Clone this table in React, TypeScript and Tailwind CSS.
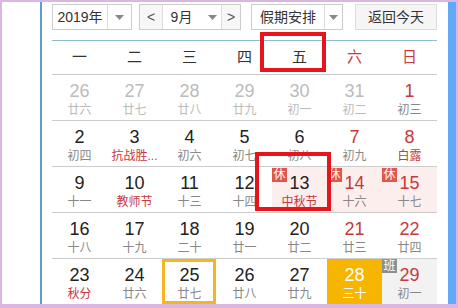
import React from 'react';

type Day = {
  d: number;
  l: string;
  muted?: boolean;
  red?: boolean;
  fest?: boolean;
  rest?: boolean;
  work?: boolean;
  today?: boolean;
  selected?: boolean;
};

const WEEK = ['一', '二', '三', '四', '五', '六', '日'];

const ROWS: Day[][] = [
  [
    { d: 26, l: '廿六', muted: true },
    { d: 27, l: '廿七', muted: true },
    { d: 28, l: '廿八', muted: true },
    { d: 29, l: '廿九', muted: true },
    { d: 30, l: '初一', muted: true },
    { d: 31, l: '初二', muted: true },
    { d: 1, l: '初三', red: true },
  ],
  [
    { d: 2, l: '初四' },
    { d: 3, l: '抗战胜...', fest: true },
    { d: 4, l: '初六' },
    { d: 5, l: '初七' },
    { d: 6, l: '初八' },
    { d: 7, l: '初九', red: true },
    { d: 8, l: '白露', red: true, fest: true },
  ],
  [
    { d: 9, l: '十一' },
    { d: 10, l: '教师节', fest: true },
    { d: 11, l: '十三' },
    { d: 12, l: '十四' },
    { d: 13, l: '中秋节', fest: true, rest: true },
    { d: 14, l: '十六', red: true, rest: true },
    { d: 15, l: '十七', red: true, rest: true },
  ],
  [
    { d: 16, l: '十八' },
    { d: 17, l: '十九' },
    { d: 18, l: '二十' },
    { d: 19, l: '廿一' },
    { d: 20, l: '廿二' },
    { d: 21, l: '廿三', red: true },
    { d: 22, l: '廿四', red: true },
  ],
  [
    { d: 23, l: '秋分', fest: true },
    { d: 24, l: '廿六' },
    { d: 25, l: '廿七', today: true },
    { d: 26, l: '廿八' },
    { d: 27, l: '廿九' },
    { d: 28, l: '三十', selected: true },
    { d: 29, l: '初一', red: true, work: true },
  ],
];

function Caret() {
  return (
    <svg width="9" height="5" viewBox="0 0 9 5">
      <path d="M0 0h9L4.5 5z" fill="#888" />
    </svg>
  );
}

function Cell({ day }: { day: Day }) {
  let bg = '';
  if (day.rest) bg = 'bg-[#fdeeee]';
  if (day.work) bg = 'bg-[#f2f2f2]';
  if (day.selected) bg = 'bg-[#f7b500]';

  let num = 'text-[#222]';
  if (day.red) num = 'text-[#c8383c]';
  if (day.muted) num = 'text-[#bbbbbb]';
  if (day.selected) num = 'text-white';

  let lunar = 'text-[#888]';
  if (day.fest) lunar = 'text-[#c8383c]';
  if (day.muted) lunar = 'text-[#bbbbbb]';
  if (day.selected) lunar = 'text-white';

  return (
    <div className={`relative flex flex-col items-center pt-[6px] ${bg}`}>
      <span className={`text-[18px] leading-[21px] ${num}`}>{day.d}</span>
      <span className={`text-[12px] leading-[16px] whitespace-nowrap ${lunar}`}>{day.l}</span>
      {day.rest && (
        <span className="absolute left-0 top-[1px] w-[15px] h-[14px] bg-[#e0554c] text-white text-[12px] leading-[14px] text-center">
          休
        </span>
      )}
      {day.work && (
        <span className="absolute left-0 top-0 w-[15px] h-[14px] bg-[#8e8e8e] text-white text-[12px] leading-[14px] text-center">
          班
        </span>
      )}
      {day.today && <div className="absolute inset-0 right-[1px] border-[3px] border-[#f4b520]" />}
    </div>
  );
}

export default function App() {
  return (
    <div className="w-[458px] h-[308px] bg-[#dcb6e2] pt-[2px] pl-[2px] pr-[2px] pb-[4px] font-['Liberation_Sans','Noto_Sans_CJK_SC',sans-serif]">
      <div className="flex h-full">
        <div className="w-[38px] bg-white" />
        <div className="w-[2px] bg-[#5b9bd6]" />
        <div className="relative flex-1 bg-white pl-[10px] pr-[11px]">
          <div className="flex items-center h-[26px] mt-[2px] text-[14px] text-[#333]">
            <div className="flex w-[80px] h-full border border-[#ccc]">
              <span className="flex-1 flex items-center justify-center">2019年</span>
              <span className="w-[24px] flex items-center justify-center border-l border-[#ddd]">
                <Caret />
              </span>
            </div>
            <div className="flex w-[102px] h-full ml-[7px] border border-[#ccc]">
              <span className="w-[23px] flex items-center justify-center bg-[#f7f7f7] border-r border-[#ddd] text-[#555]">&lt;</span>
              <span className="flex-1 flex items-center justify-center gap-[16px] pl-[4px]">
                <span>9月</span>
                <Caret />
              </span>
              <span className="w-[19px] flex items-center justify-center bg-[#f7f7f7] border-l border-[#ddd] text-[#555]">&gt;</span>
            </div>
            <div className="flex w-[92px] h-full ml-[10px] border border-[#ccc]">
              <span className="flex-1 flex items-center justify-center">假期安排</span>
              <span className="w-[18px] flex items-center justify-center border-l border-[#ddd]">
                <Caret />
              </span>
            </div>
            <div className="flex w-[82px] h-full ml-[12px] items-center justify-center border border-[#ddd] bg-[#f5f5f5]">
              返回今天
            </div>
          </div>

          <div className="mt-[10px] border-t border-[#8fbfcf] grid grid-cols-7 h-[34px] items-center text-[15px] text-[#333]">
            {WEEK.map((w, i) => (
              <span key={w} className={`text-center ${i > 4 ? 'text-[#c8383c]' : ''}`}>
                {w}
              </span>
            ))}
          </div>

          {ROWS.map((row, r) => (
            <div key={r} className="grid grid-cols-7 h-[46px] border-t border-[#cccccc]">
              {row.map((day, c) => (
                <Cell key={c} day={day} />
              ))}
            </div>
          ))}

          <div className="absolute left-[218px] top-[30px] w-[66px] h-[40px] border-[4px] border-[#e8141c]" />
          <div className="absolute left-[213px] top-[150px] w-[76px] h-[59px] border-[4px] border-[#e8141c]" />
        </div>
        <div className="w-[8px] bg-[#62a9f7]" />
      </div>
    </div>
  );
}
